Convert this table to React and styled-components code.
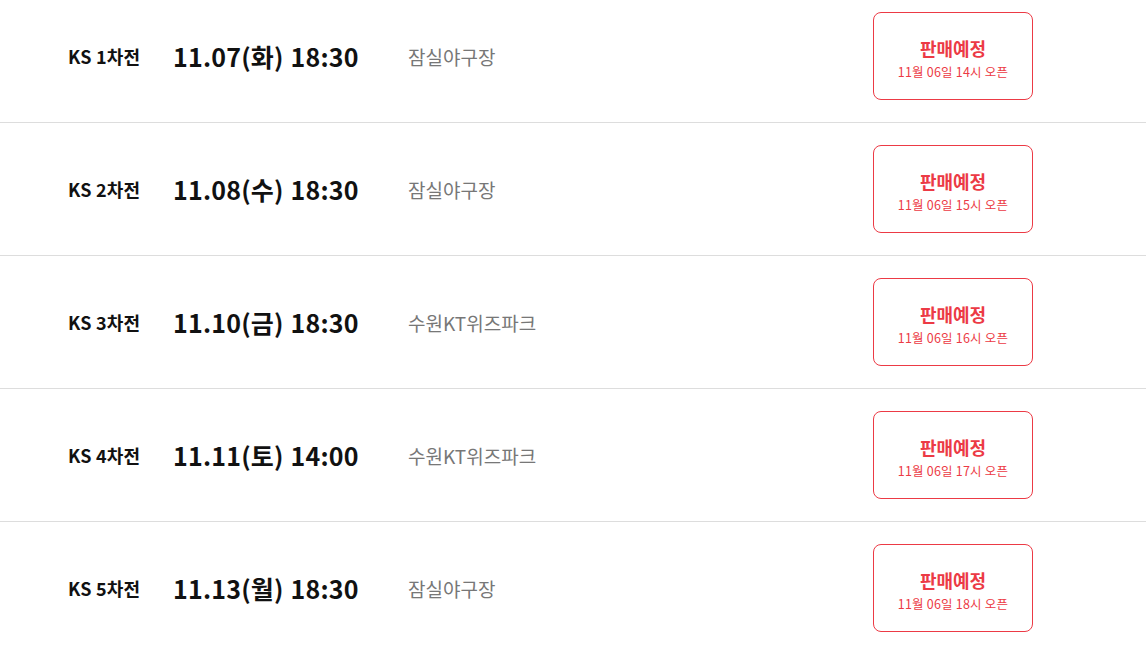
import React from "react";
import styled, { createGlobalStyle } from "styled-components";

const Global = createGlobalStyle`
  html, body { margin: 0; padding: 0; background: #fff; }
  body { font-family: "Noto Sans CJK KR", sans-serif; overflow: hidden; }
`;

const List = styled.ul`
  list-style: none;
  margin: -10px 0 0;
  padding: 0;
`;

const Row = styled.li`
  display: grid;
  grid-template-columns: 105px 235px 1fr 160px;
  align-items: center;
  padding: 22px 113px 22px 68px;
  border-bottom: 1px solid #dddddd;
  &:last-child { border-bottom: none; }
`;

const Game = styled.span`
  font-size: 18px;
  font-weight: 700;
  color: #111;
  letter-spacing: 0.2px;
`;

const When = styled.span`
  font-size: 25px;
  font-weight: 700;
  color: #111;
  letter-spacing: 0.2px;
  word-spacing: 1px;
`;

const Venue = styled.span`
  font-size: 19px;
  color: #777;
`;

const Ticket = styled.button`
  box-sizing: border-box;
  width: 160px;
  height: 88px;
  border: 1px solid #ec3a45;
  border-radius: 8px;
  background: #fff;
  display: flex;
  flex-direction: column;
  align-items: center;
  justify-content: center;
  gap: 0;
  font-family: inherit;
  padding: 3px 0 0;
  cursor: pointer;
`;

const Status = styled.span`
  font-size: 18px;
  font-weight: 700;
  color: #ec3a45;
  line-height: 27px;
`;

const Open = styled.span`
  font-size: 12.5px;
  font-weight: 400;
  color: #ec3a45;
  line-height: 19px;
  letter-spacing: 0.2px;
`;

const games = [
  { n: 1, date: "11.07(화) 18:30", venue: "잠실야구장", hour: 14 },
  { n: 2, date: "11.08(수) 18:30", venue: "잠실야구장", hour: 15 },
  { n: 3, date: "11.10(금) 18:30", venue: "수원KT위즈파크", hour: 16 },
  { n: 4, date: "11.11(토) 14:00", venue: "수원KT위즈파크", hour: 17 },
  { n: 5, date: "11.13(월) 18:30", venue: "잠실야구장", hour: 18 },
];

export default function App() {
  return (
    <>
      <Global />
      <List>
        {games.map((g) => (
          <Row key={g.n}>
            <Game>KS {g.n}차전</Game>
            <When>{g.date}</When>
            <Venue>{g.venue}</Venue>
            <Ticket>
              <Status>판매예정</Status>
              <Open>11월 06일 {g.hour}시 오픈</Open>
            </Ticket>
          </Row>
        ))}
      </List>
    </>
  );
}
